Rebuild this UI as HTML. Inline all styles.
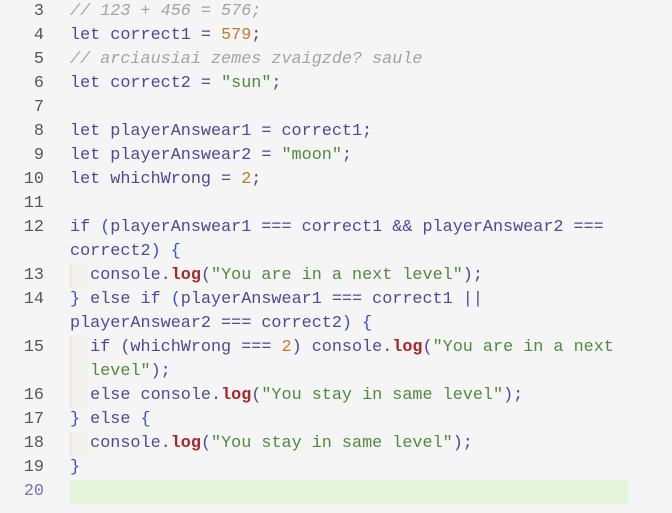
<!DOCTYPE html>
<html><head><style>
body{margin:0;background:#f5f5f5;width:672px;height:513px;overflow:hidden;font-family:"Liberation Mono",monospace;font-size:16.8px;}
.r{position:absolute;left:0;height:24px;line-height:24px;white-space:pre;color:#4f4896;}
.n{position:absolute;width:44px;text-align:right;color:#555;left:0;}
.t{position:absolute;left:70px;}
.c{color:#a3a3a3;font-style:italic}
.num{color:#c07a30}
.s{color:#4f8a3c}
.l{color:#a8282a;font-weight:bold}
.b{color:#3550c8}
.ind{position:absolute;left:70px;width:17px;background:#f1f0ea;border-left:1px solid #e0dfd8;}
</style></head><body>
<div class="ind" style="top:264px;height:24px"></div>
<div class="ind" style="top:336px;height:72px"></div>
<div class="ind" style="top:432px;height:24px"></div>
<div style="position:absolute;left:70px;top:480px;width:558px;height:24px;background:#e4f5d9"></div>
<div class="r" style="top:0"><span class="n">3</span><span class="t c">// 123 + 456 = 576;</span></div>
<div class="r" style="top:24px"><span class="n">4</span><span class="t">let correct1 = <span class="num">579</span>;</span></div>
<div class="r" style="top:48px"><span class="n">5</span><span class="t c">// arciausiai zemes zvaigzde? saule</span></div>
<div class="r" style="top:72px"><span class="n">6</span><span class="t">let correct2 = <span class="s">"sun"</span>;</span></div>
<div class="r" style="top:96px"><span class="n">7</span></div>
<div class="r" style="top:120px"><span class="n">8</span><span class="t">let playerAnswear1 = correct1;</span></div>
<div class="r" style="top:144px"><span class="n">9</span><span class="t">let playerAnswear2 = <span class="s">"moon"</span>;</span></div>
<div class="r" style="top:168px"><span class="n">10</span><span class="t">let whichWrong = <span class="num">2</span>;</span></div>
<div class="r" style="top:192px"><span class="n">11</span></div>
<div class="r" style="top:216px"><span class="n">12</span><span class="t">if <span class="b">(</span>playerAnswear1 === correct1 &amp;&amp; playerAnswear2 ===</span></div>
<div class="r" style="top:240px"><span class="t">correct2<span class="b">)</span> <span class="b">{</span></span></div>
<div class="r" style="top:264px"><span class="n">13</span><span class="t">  console.<span class="l">log</span>(<span class="s">"You are in a next level"</span>);</span></div>
<div class="r" style="top:288px"><span class="n">14</span><span class="t"><span class="b">}</span> else if <span class="b">(</span>playerAnswear1 === correct1 ||</span></div>
<div class="r" style="top:312px"><span class="t">playerAnswear2 === correct2<span class="b">)</span> <span class="b">{</span></span></div>
<div class="r" style="top:336px"><span class="n">15</span><span class="t">  if (whichWrong === <span class="num">2</span>) console.<span class="l">log</span>(<span class="s">"You are in a next</span></span></div>
<div class="r" style="top:360px"><span class="t">  <span class="s">level"</span>);</span></div>
<div class="r" style="top:384px"><span class="n">16</span><span class="t">  else console.<span class="l">log</span>(<span class="s">"You stay in same level"</span>);</span></div>
<div class="r" style="top:408px"><span class="n">17</span><span class="t"><span class="b">}</span> else <span class="b">{</span></span></div>
<div class="r" style="top:432px"><span class="n">18</span><span class="t">  console.<span class="l">log</span>(<span class="s">"You stay in same level"</span>);</span></div>
<div class="r" style="top:456px"><span class="n">19</span><span class="t"><span class="b">}</span></span></div>
<div class="r" style="top:480px"><span class="n" style="color:#7a70b5">20</span></div>
</body></html>
